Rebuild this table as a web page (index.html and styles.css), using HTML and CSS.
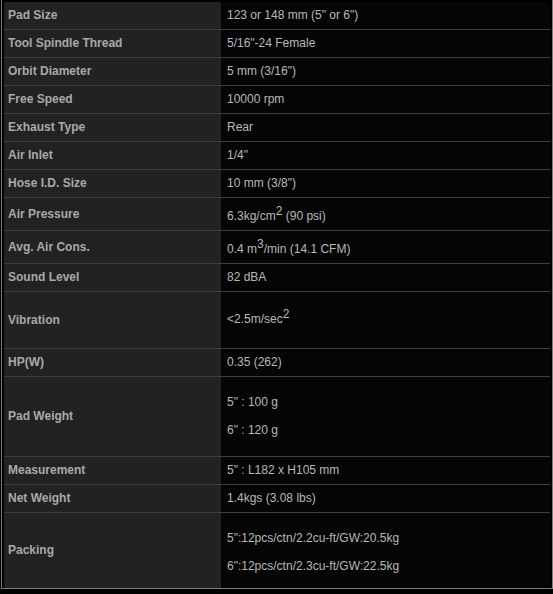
FILE: index.html
```html
<!DOCTYPE html>
<html>
<head>
<meta charset="utf-8">
<link rel="stylesheet" href="styles.css">
</head>
<body>
<div class="frame">
<table class="specs">
<tr><th>Pad Size</th><td>123 or 148 mm (5" or 6")</td></tr>
<tr><th>Tool Spindle Thread</th><td>5/16"-24 Female</td></tr>
<tr><th>Orbit Diameter</th><td>5 mm (3/16")</td></tr>
<tr><th>Free Speed</th><td>10000 rpm</td></tr>
<tr><th>Exhaust Type</th><td>Rear</td></tr>
<tr><th>Air Inlet</th><td>1/4"</td></tr>
<tr><th>Hose I.D. Size</th><td>10 mm (3/8")</td></tr>
<tr><th>Air Pressure</th><td>6.3kg/cm<sup>2</sup> (90 psi)</td></tr>
<tr><th>Avg. Air Cons.</th><td>0.4 m<sup>3</sup>/min (14.1 CFM)</td></tr>
<tr><th>Sound Level</th><td>82 dBA</td></tr>
<tr><th>Vibration</th><td class="vib"><p>&lt;2.5m/sec<sup>2</sup></p></td></tr>
<tr><th>HP(W)</th><td>0.35 (262)</td></tr>
<tr><th>Pad Weight</th><td class="padw"><p>5" : 100 g</p><p>6" : 120 g</p></td></tr>
<tr><th>Measurement</th><td>5" : L182 x H105 mm</td></tr>
<tr><th>Net Weight</th><td>1.4kgs (3.08 lbs)</td></tr>
<tr><th>Packing</th><td class="pack"><p>5":12pcs/ctn/2.2cu-ft/GW:20.5kg</p><p>6":12pcs/ctn/2.3cu-ft/GW:22.5kg</p></td></tr>
</table>
</div>
</body>
</html>
```
FILE: styles.css
```css
html, body {
  margin: 0;
  background: #000;
}
body {
  font-family: "Liberation Sans", Arial, sans-serif;
  font-size: 12px;
}
.frame {
  width: 546px;
  margin-left: 1px;
  border: 1px solid #7c7c7c;
  border-top: none;
  padding: 2px 2px 0 2px;
  background: #000;
}
.specs {
  width: 100%;
  border-collapse: collapse;
}
.specs th,
.specs td {
  border-bottom: 1px solid #3e3e3e;
  padding: 5px 4px 5px 5px;
  line-height: 17px;
  vertical-align: middle;
  text-align: left;
}
.specs tr:last-child th,
.specs tr:last-child td {
  border-bottom: none;
}
.specs th {
  width: 209px;
  background: #222;
  color: #a9a9a9;
  font-weight: bold;
  padding-left: 4px;
}
.specs td {
  background: #050505;
  color: #b8b8b8;
  padding-left: 6px;
}
.specs p {
  margin: 11px 0;
}
.specs sup {
  font-size: 12px;
  vertical-align: 5px;
  line-height: 17px;
}
.specs .vib {
  padding-top: 2px;
  padding-bottom: 8px;
}
.specs .vib p {
  margin: 12px 0;
}
.specs .padw {
  padding-top: 6px;
  padding-bottom: 6px;
}
.specs .pack {
  padding-top: 6px;
  padding-bottom: 2px;
}
```
